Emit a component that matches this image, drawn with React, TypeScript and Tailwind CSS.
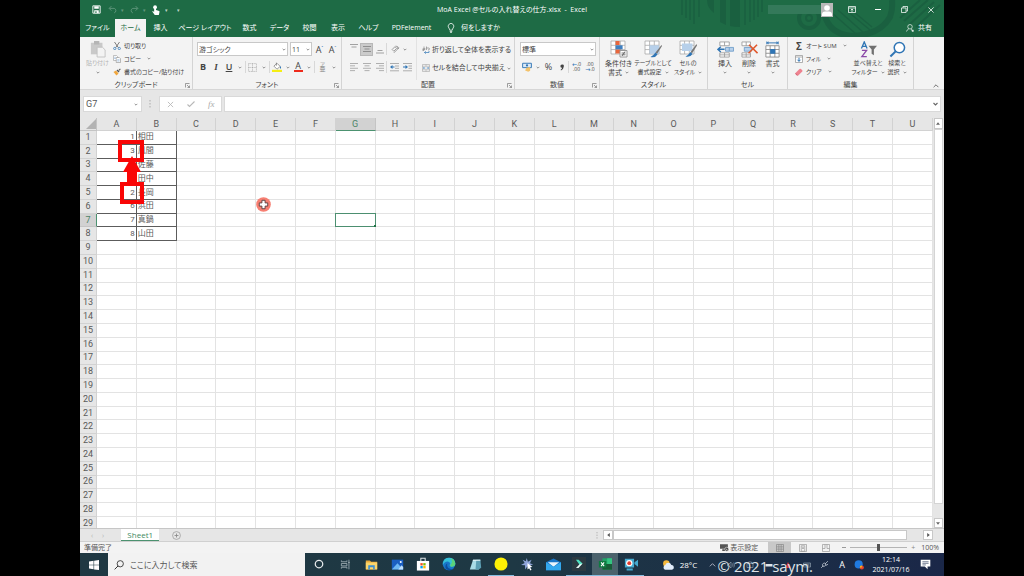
import React from "react";

type Kids = { children?: React.ReactNode };

const Caret = () => (
  <svg viewBox="0 0 6 4" className="h-[3px] w-[4px] shrink-0" aria-hidden="true">
    <path d="M1 1l2 2 2-2" fill="none" stroke="#777" strokeWidth="1.2" />
  </svg>
);

const Sep = () => <span className="h-3 w-px shrink-0 bg-[#d8d8d8]" />;

function Svg({ box = "0 0 16 16", cls, children }: Kids & { box?: string; cls: string }) {
  return (
    <svg viewBox={box} className={`shrink-0 ${cls}`} fill="none" aria-hidden="true">
      {children}
    </svg>
  );
}

function Tool({ label, cls, children }: Kids & { label: string; cls: string }) {
  return (
    <button type="button" aria-label={label} className={`flex h-[13px] shrink-0 items-center justify-center ${cls}`}>
      {children}
    </button>
  );
}

function Group({ name, cls, launcher = false, children }: Kids & { name: string; cls: string; launcher?: boolean }) {
  return (
    <section className={`relative flex shrink-0 flex-col border-r border-[#d4d4d4] ${cls}`}>
      <div className="flex h-[43px]">{children}</div>
      <h2 className="text-center leading-[9px]">{name}</h2>
      {launcher && (
        <button type="button" aria-label={`${name}の設定`} className="absolute right-[2px] bottom-[1px]">
          <Svg box="0 0 10 10" cls="size-[5px]">
            <path d="M1 9V1h8M4 4l5 5M9 5v4H5" stroke="#777" strokeWidth="1.4" />
          </Svg>
        </button>
      )}
    </section>
  );
}

function BigButton({ icon, lines, cls, caret = "row" }: { icon: React.ReactNode; lines: string[]; cls: string; caret?: "row" | "below" }) {
  return (
    <button type="button" className={`flex shrink-0 flex-col items-center pt-[3px] leading-[9px] ${cls}`}>
      <span className="mb-[1px] flex h-[18px] items-center">{icon}</span>
      <span>{lines[0]}</span>
      <span className="flex h-[9px] items-center gap-[3px]">
        {caret === "row" && lines[1]}
        <Caret />
      </span>
    </button>
  );
}

function LineButton({ icon, text, caret = false }: { icon: React.ReactNode; text: string; caret?: boolean }) {
  return (
    <button type="button" className="flex h-[13px] items-center gap-[3px] text-[6px]">
      <span className="flex w-[8px] justify-center">{icon}</span>
      <span>{text}</span>
      {caret && <span className="ml-[3px]"><Caret /></span>}
    </button>
  );
}

function Picker({ label, value, cls }: { label: string; value: string; cls: string }) {
  return (
    <span className={`relative flex h-[14px] shrink-0 ${cls}`}>
      <select aria-label={label} className="w-full appearance-none border border-[#c8c8c8] bg-white pl-px text-[7px] leading-none outline-none">
        <option>{value}</option>
      </select>
      <span className="pointer-events-none absolute inset-y-0 right-[2px] flex items-center">
        <Caret />
      </span>
    </span>
  );
}

function Lines({ widths, align }: { widths: number[]; align: "l" | "c" | "r" }) {
  return (
    <Svg box="0 0 8 10" cls="h-[10px] w-[8px]">
      {widths.map((w, i) => {
        const x = align === "l" ? 0 : align === "c" ? (8 - w) / 2 : 8 - w;
        return <rect key={i} x={x} y={1 + i * 2.4} width={w} height="0.9" fill="#a8a8a8" />;
      })}
    </Svg>
  );
}

const GridLines = () => <path d="M1 1h14v13H1zM1 5.3h14M1 9.6h14M5.6 1v13M10.3 1v13" stroke="#a8a8a8" fill="#fff" strokeWidth="0.8" />;

function TitleBar() {
  return (
    <div className="grid h-[19px] shrink-0 grid-cols-[1fr_auto_1fr] items-center text-white">
      <div className="flex items-center pl-[12px]">
        <button type="button" aria-label="上書き保存">
          <Svg cls="size-[9px]">
            <path d="M1.5 1.5h13v13h-13z" stroke="#fff" strokeWidth="1.6" />
            <path d="M4 2v4.500h8V2M4 9.500h8v5H4z" fill="#fff" />
            <path d="M6 11h2v3H6z" fill="#1e6b45" />
          </Svg>
        </button>
        <button type="button" aria-label="元に戻す" className="ml-[7px] flex items-center gap-[4px] opacity-30">
          <Svg cls="size-[9px]">
            <path d="M6 2L2 6l4 4M2.500 6H11q3 1 3 4t-3 4" stroke="#fff" strokeWidth="1.6" />
          </Svg>
          <span className="text-[5px]">▾</span>
        </button>
        <button type="button" aria-label="やり直し" className="ml-[6px] flex items-center gap-[4px] opacity-30">
          <Svg cls="size-[9px]">
            <path d="M10 2l4 4-4 4M13.500 6H5Q2 7 2 10t3 4" stroke="#fff" strokeWidth="1.6" />
          </Svg>
          <span className="text-[5px]">▾</span>
        </button>
        <button type="button" aria-label="タッチ/マウス モードの切り替え" className="ml-[5px]">
          <Svg cls="size-[10px]">
            <circle cx="6.500" cy="3.500" r="3" fill="#fff" />
            <path d="M5 4h3v4l5 1.500q1 .5 .5 2L12.500 16H6L2 10.500l1-1 2 1.500z" fill="#fff" />
          </Svg>
        </button>
        <span className="ml-[4px] text-[5px] opacity-70">▾</span>
        <span className="ml-[9px] text-[5px] opacity-70">▾</span>
      </div>
      <h1 className="whitespace-pre">MoA Excel @セルの入れ替えの仕方.xlsx  -  Excel</h1>
      <div className="flex items-center justify-end pr-[10px]">
        <span className="h-[9px] w-[53px] bg-[#34795a]" />
        <span className="mr-[15px] flex h-[14px] w-[12px] items-end justify-center bg-[#b9b9b9]">
          <Svg box="0 0 12 14" cls="h-[14px] w-[12px]">
            <circle cx="6" cy="5" r="2.800" fill="#fff" />
            <path d="M1 13V10.500Q1.500 8.500 4 8.500h4q2.500 0 3 2V13z" fill="#fff" />
          </Svg>
        </span>
        <button type="button" aria-label="リボンの表示オプション" className="mr-[19px]">
          <Svg box="0 0 16 14" cls="h-[7px] w-[8px]">
            <path d="M1 1h14v12H1zM1 4h14M8 12V6M5.500 8.500L8 6l2.500 2.500" stroke="#fff" strokeWidth="1.5" />
          </Svg>
        </button>
        <button type="button" aria-label="最小化" className="mr-[20px] h-px w-[6px] bg-white" />
        <button type="button" aria-label="元に戻す(縮小)" className="mr-[20px]">
          <Svg cls="size-[7px]">
            <path d="M1 4.500h10.500V15H1zM4.500 4V1H15v10.500h-3" stroke="#fff" strokeWidth="1.8" />
          </Svg>
        </button>
        <button type="button" aria-label="閉じる">
          <Svg cls="size-[6px]">
            <path d="M1 1l14 14M15 1L1 15" stroke="#fff" strokeWidth="2" />
          </Svg>
        </button>
      </div>
    </div>
  );
}

const tabs = [
  { name: "ファイル", cls: "w-[35px] text-white" },
  { name: "ホーム", cls: "w-[31px] bg-[#f3f3f3] text-[#1e6b45]" },
  { name: "挿入", cls: "w-[29px] text-white" },
  { name: "ページ レイアウト", cls: "w-[60px] text-white" },
  { name: "数式", cls: "w-[29px] text-white" },
  { name: "データ", cls: "w-[31px] text-white" },
  { name: "校閲", cls: "w-[29px] text-white" },
  { name: "表示", cls: "w-[28px] text-white" },
  { name: "ヘルプ", cls: "w-[33px] text-white" },
  { name: "PDFelement", cls: "w-[53px] text-white" },
];

function TabRow() {
  return (
    <nav className="flex h-[18px] shrink-0 items-stretch text-white">
      {tabs.map((t) => (
        <button key={t.name} type="button" className={`flex shrink-0 items-center justify-center ${t.cls}`}>
          {t.name}
        </button>
      ))}
      <button type="button" className="ml-[9px] flex items-center gap-[6px]">
        <Svg box="0 0 12 16" cls="h-[10px] w-[8px]">
          <path d="M4 11.500Q4 9.500 2.500 8A4.500 4.500 0 1 1 9.500 8Q8 9.500 8 11.500zM4 13.500h4M4.500 15.300h3" stroke="#fff" strokeWidth="1.200" />
        </Svg>
        何をしますか
      </button>
      <button type="button" className="mr-[12px] ml-auto flex items-center gap-[4px]">
        <Svg cls="size-[8px]">
          <circle cx="8" cy="5.500" r="4.500" stroke="#fff" strokeWidth="1.300" />
          <path d="M1 15q1-4 4.500-5M10 10l4 5M11 13.500h5M13.500 11v5" stroke="#fff" strokeWidth="1.300" />
        </Svg>
        共有
      </button>
    </nav>
  );
}

function Ribbon() {
  return (
    <div className="flex h-[53px] shrink-0 overflow-hidden border-b border-[#d6d6d6] bg-[#f3f3f3] text-[#444]">
      <Group name="クリップボード" cls="w-[113px]" launcher>
        <div className="w-[33px] pl-[2px] text-[#b3b3b3]">
          <BigButton
            cls="w-[31px] text-[6px]"
            caret="below"
            lines={["貼り付け"]}
            icon={
              <Svg box="0 0 18 20" cls="h-[18px] w-[16px]">
                <path d="M1 3h13v13H1z" fill="#c9c9c9" />
                <path d="M4.500 1h6v4h-6z" fill="#b5b5b5" />
                <path d="M8 8h6l3 3v8H8z" fill="#f3f3f3" stroke="#c0c0c0" />
              </Svg>
            }
          />
        </div>
        <div className="pt-[2px]">
          <LineButton
            text="切り取り"
            icon={
              <Svg cls="size-[8px]">
                <path d="M3 0l7.500 11M13 0L5.500 11" stroke="#555" strokeWidth="1.500" />
                <circle cx="3.500" cy="13" r="2.300" stroke="#2f75b5" strokeWidth="1.500" />
                <circle cx="12.500" cy="13" r="2.300" stroke="#2f75b5" strokeWidth="1.500" />
              </Svg>
            }
          />
          <LineButton
            text="コピー"
            caret
            icon={
              <Svg cls="size-[8px]">
                <path d="M1 1h6l2 2v8H1z" fill="#fff" stroke="#888" />
                <path d="M6.500 5h6l2.500 2.500V15H6.500z" fill="#fff" stroke="#777" />
                <path d="M8.500 9.500h4.500M8.500 12h4.500M2.500 4.500h3M2.500 7h3" stroke="#5b8cc0" />
              </Svg>
            }
          />
          <LineButton
            text="書式のコピー/貼り付け"
            icon={
              <Svg cls="size-[8px]">
                <path d="M1 8l5-3 5 6-4 4z" fill="#f0a63c" />
                <path d="M7 5l4 4 2-2-4-4zM11 4l3-3 1.500 1.500-3 3z" fill="#555" />
              </Svg>
            }
          />
        </div>
      </Group>

      <Group name="フォント" cls="w-[149px]" launcher>
        <div className="pl-[4px]">
          <div className="flex h-[20px] items-end">
            <Picker label="フォント" value="游ゴシック" cls="mb-[1px] w-[91px]" />
            <Picker label="フォント サイズ" value="11" cls="mb-[1px] ml-[2px] w-[22px]" />
            <Tool label="フォント サイズの拡大" cls="mb-[1px] ml-[1px] w-[13px] text-[9px]">A<span className="mb-[4px] text-[5px] text-[#2f75b5]">ˆ</span></Tool>
            <Tool label="フォント サイズの縮小" cls="mb-[1px] w-[13px] text-[9px]">A<span className="mb-[4px] text-[5px] text-[#2f75b5]">ˇ</span></Tool>
          </div>
          <div className="flex h-[20px] items-center">
            <Tool label="太字" cls="w-[12px] text-[9px] font-bold">B</Tool>
            <Tool label="斜体" cls="w-[14px] font-['Liberation_Serif',serif] text-[9px] font-bold italic">I</Tool>
            <Tool label="下線" cls="w-[12px] text-[9px] font-semibold underline">U</Tool>
            <Tool label="下線の種類" cls="w-[10px]"><Caret /></Tool>
            <Sep />
            <Tool label="罫線" cls="w-[13px]">
              <Svg cls="size-[9px]"><path d="M1 1h14v14H1zM8 1v14M1 8h14" stroke="#999" strokeDasharray="2 1" /></Svg>
            </Tool>
            <Tool label="罫線の種類" cls="w-[10px]"><Caret /></Tool>
            <Sep />
            <Tool label="塗りつぶしの色" cls="w-[13px]">
              <Svg cls="size-[10px]">
                <path d="M3 6.500L8 2l5 5-5 4.500z" fill="#fff" stroke="#666" />
                <path d="M7 1v5" stroke="#666" />
                <path d="M13 6q2.500 3 1 5-2-1-1-5z" fill="#2f75b5" />
                <path d="M0 12.500h16v3.500H0z" fill="#f5ee14" />
              </Svg>
            </Tool>
            <Tool label="塗りつぶしの種類" cls="w-[9px]"><Caret /></Tool>
            <Tool label="フォントの色" cls="w-[12px] flex-col text-[9px]">
              <span className="h-[8px] leading-[8px]">A</span>
              <span className="h-[2px] w-[9px] bg-[#ee2a1b]" />
            </Tool>
            <Tool label="フォントの色の種類" cls="w-[10px]"><Caret /></Tool>
            <Sep />
            <Tool label="ふりがな" cls="w-[15px] flex-col text-[#888]">
              <span className="text-[5px] leading-[4px]">ア</span>
              <span className="text-[6px] leading-[6px]">亜</span>
            </Tool>
            <Tool label="ふりがなの設定" cls="w-[8px]"><Caret /></Tool>
          </div>
        </div>
      </Group>

      <Group name="配置" cls="w-[173px]" launcher>
        <div className="w-[74px] pl-[5px]">
          <div className="flex h-[20px] items-center pt-[4px]">
            <Tool label="上揃え" cls="w-[13px] pb-[6px]"><Svg box="0 0 8 4" cls="h-[4px] w-[8px]"><path d="M0 .5h8M1.500 3h5" stroke="#999" strokeWidth=".9" /></Svg></Tool>
            <Tool label="上下中央揃え" cls="w-[13px] border border-[#b8b8b8] bg-[#cbcbcb]"><Svg box="0 0 8 6" cls="h-[6px] w-[8px]"><path d="M0 .5h8M1.500 3h5M0 5.500h8" stroke="#888" strokeWidth=".9" /></Svg></Tool>
            <Tool label="下揃え" cls="w-[13px] pt-[5px]"><Svg box="0 0 8 4" cls="h-[4px] w-[8px]"><path d="M1.500 .5h5M0 3h8" stroke="#999" strokeWidth=".9" /></Svg></Tool>
            <Sep />
            <Tool label="方向" cls="w-[16px]">
              <Svg cls="size-[9px]"><path d="M2 8l5-5 3 3-5 5zM5 14L14 5M14 5l-3 .5M8 2q5-1 5 5" stroke="#888" strokeWidth="1.400" /></Svg>
            </Tool>
            <Caret />
          </div>
          <div className="flex h-[20px] items-center">
            <Tool label="左揃え" cls="w-[13px]"><Lines align="l" widths={[8, 5, 8, 5]} /></Tool>
            <Tool label="中央揃え" cls="w-[13px]"><Lines align="c" widths={[8, 5, 8, 5]} /></Tool>
            <Tool label="右揃え" cls="w-[13px]"><Lines align="r" widths={[8, 5, 8, 5]} /></Tool>
            <Sep />
            <Tool label="インデントを減らす" cls="w-[14px]">
              <Svg box="0 0 9 10" cls="h-[10px] w-[9px]"><path d="M0 1.500h9M5 4h4M5 6.300h4M0 8.800h9" stroke="#a5a5a5" strokeWidth=".9" /><path d="M0 5l2.500-2v4zM2 4.500h2.500v1H2z" fill="#2f75b5" /></Svg>
            </Tool>
            <Tool label="インデントを増やす" cls="w-[12px]">
              <Svg box="0 0 9 10" cls="h-[10px] w-[9px]"><path d="M0 1.500h9M5.500 4H9M5.500 6.300H9M0 8.800h9" stroke="#a5a5a5" strokeWidth=".9" /><path d="M5 5L2.500 3v4zM0 4.500h2.500v1H0z" fill="#2f75b5" /></Svg>
            </Tool>
          </div>
        </div>
        <div className="flex grow flex-col border-l border-[#e2e2e2] pt-[3px] pl-[5px]">
          <button type="button" className="flex h-[19px] items-center gap-[2px]">
            <Svg cls="size-[8px]">
              <path d="M1 6h6M4 1v8q-3 1-3-1t5-2M9 1v7M9 4h4q2 0 2 2t-3 2" stroke="#777" strokeWidth="1.200" />
              <path d="M14 10v3H5M7.500 10.500L5 13l2.500 2.500" stroke="#2f75b5" strokeWidth="1.400" />
            </Svg>
            折り返して全体を表示する
          </button>
          <button type="button" className="flex h-[18px] items-center gap-[2px]">
            <Svg cls="size-[8px]">
              <path d="M1 1h14v14H1zM1 4.500h14M1 11.500h14M8 1v3.500M8 11.500V15" stroke="#999" />
              <path d="M2.500 8h4M9.500 8h4M4 6.500L2.500 8 4 9.500M12 6.500L13.500 8 12 9.500" stroke="#2f75b5" strokeWidth="1.200" />
            </Svg>
            セルを結合して中央揃え
            <Caret />
          </button>
        </div>
      </Group>

      <Group name="数値" cls="w-[85px]" launcher>
        <div className="pl-[5px]">
          <div className="flex h-[20px] items-end">
            <Picker label="表示形式" value="標準" cls="mb-[1px] w-[76px]" />
          </div>
          <div className="flex h-[20px] items-center">
            <Tool label="通貨表示形式" cls="w-[13px]">
              <Svg cls="size-[10px]">
                <path d="M1 2h14v7H1z" fill="#dce9f6" stroke="#2f75b5" strokeWidth="1.500" />
                <circle cx="8" cy="5.500" r="1.800" fill="#2f75b5" />
                <path d="M7 9l6-1v6l-3 1.500-5-2z" fill="#f3c26b" />
              </Svg>
            </Tool>
            <Tool label="通貨の種類" cls="w-[9px]"><Caret /></Tool>
            <Tool label="パーセント スタイル" cls="w-[13px] text-[9px]">%</Tool>
            <Tool label="桁区切りスタイル" cls="w-[13px]">
              <Svg box="0 0 6 10" cls="h-[7px] w-[4px]"><path d="M3 .5a2.500 2.500 0 0 1 2.700 3Q5.500 7.500 1.500 9.500L1 8.500Q3 7 3.200 5.500A2.500 2.500 0 0 1 3 .5z" fill="#444" /></Svg>
            </Tool>
            <Sep />
            <Tool label="小数点以下の表示桁数を増やす" cls="w-[15px] flex-col text-[5px] leading-[5px]"><span><b className="text-[#2f75b5]">←</b>.0</span><span>.00</span></Tool>
            <Tool label="小数点以下の表示桁数を減らす" cls="w-[12px] flex-col text-[5px] leading-[5px]"><span>.00</span><span><b className="text-[#2f75b5]">→</b>.0</span></Tool>
          </div>
        </div>
      </Group>

      <Group name="スタイル" cls="w-[108px]">
        <BigButton
          cls="ml-[2px] w-[33px]"
          lines={["条件付き", "書式"]}
          icon={
            <Svg box="0 0 18 18" cls="size-[18px]">
              <GridLines />
              <path d="M5.600 1h4v4h-4zM5.600 9.500h5v4h-5z" fill="#e8663c" />
              <path d="M5.600 5.300h7v4h-7z" fill="#3f7fc0" />
              <path d="M10 10.500h7v6.500h-7z" fill="#fff" stroke="#999" />
              <path d="M11.500 13h4M11.500 14.800h4M15 11.500l-3 4.500" stroke="#555" strokeWidth=".8" />
            </Svg>
          }
        />
        <BigButton
          cls="w-[36px] text-[6px]"
          lines={["テーブルとして", "書式設定"]}
          icon={
            <Svg box="0 0 18 18" cls="size-[18px]">
              <GridLines />
              <path d="M5.600 5.300H15v8.500H5.600z" fill="#b7d0ea" />
              <path d="M17.500 5l-6 7.500 1.500 1.500 5-8z" fill="#777" />
              <path d="M11.500 12.500l2 2q-2 3.500-7 2.500 2.500-1 5-4.500z" fill="#2f75b5" />
            </Svg>
          }
        />
        <BigButton
          cls="w-[34px] text-[6px]"
          lines={["セルの", "スタイル"]}
          icon={
            <Svg box="0 0 18 18" cls="size-[18px]">
              <GridLines />
              <path d="M3 3.500h10.500v7.500H3z" fill="#b7d0ea" />
              <path d="M17.500 4l-6 8 1.500 1.500 5-8z" fill="#777" />
              <path d="M11.500 12l2 2q-2 3.500-7 2.500 2.500-1 5-4.500z" fill="#2f75b5" />
            </Svg>
          }
        />
      </Group>

      <Group name="セル" cls="w-[80px]">
        <BigButton
          cls="ml-[5px] w-[24px]"
          caret="below"
          lines={["挿入"]}
          icon={
            <Svg box="0 0 18 18" cls="size-[17px]">
              <path d="M3 1h10v4H3zM8 1v4M3 12.500h10v4.500H3zM8 12.500V17M3 14.700h10" fill="#fff" stroke="#999" strokeWidth=".9" />
              <path d="M9 6.800h8.500v4H9zM13 6.800v4" fill="#b7d0ea" stroke="#6d9cc9" strokeWidth=".9" />
              <path d="M1 8.800h7M4 6L1 8.800l3 2.800" stroke="#2f75b5" strokeWidth="1.500" />
            </Svg>
          }
        />
        <BigButton
          cls="w-[24px]"
          caret="below"
          lines={["削除"]}
          icon={
            <Svg box="0 0 18 18" cls="size-[17px]">
              <path d="M1 1h9v4H1zM5.500 1v4M1 12.500h9v4.500H1zM5.500 12.500V17M1 14.700h9" fill="#fff" stroke="#999" strokeWidth=".9" />
              <path d="M3.500 6.800H11v4H3.500z" fill="#b7d0ea" stroke="#6d9cc9" strokeWidth=".9" />
              <path d="M8.500 4l9 9M17 4l-9 9" stroke="#e0582c" strokeWidth="1.700" />
            </Svg>
          }
        />
        <BigButton
          cls="w-[23px]"
          caret="below"
          lines={["書式"]}
          icon={
            <Svg box="0 0 18 18" cls="size-[17px]">
              <path d="M2 5h14v12H2zM6.500 5v12M11.500 5v12M2 9h14M2 13h14" fill="#fff" stroke="#888" strokeWidth=".9" />
              <path d="M6.500 8.500h5.500v5H6.500z" fill="#2f75b5" />
              <path d="M3 2h12M3 .5v3M15 .5v3M5 1L3.500 2 5 3M13 1l1.500 1L13 3" stroke="#2f75b5" />
            </Svg>
          }
        />
      </Group>

      <Group name="編集" cls="w-[126px]">
        <div className="w-[60px] pt-[2px] pl-[7px]">
          <LineButton text="オート SUM" caret icon={<span className="text-[10px] font-bold">Σ</span>} />
          <LineButton
            text="フィル"
            caret
            icon={
              <Svg cls="size-[8px]">
                <path d="M1 1h14v14H1zM1 4h14" fill="#fff" stroke="#888" strokeWidth="1.300" />
                <path d="M8 5.500v7M5 9.500l3 3.200 3-3.200" stroke="#2f75b5" strokeWidth="2" />
              </Svg>
            }
          />
          <LineButton
            text="クリア"
            caret
            icon={
              <Svg cls="size-[8px]">
                <path d="M1 10l8-8q1.500-1 3 0l2.500 2.500q1 1.200 0 2.500l-8 8H4l-3-3q-.8-1 0-2z" fill="#ee8390" />
                <path d="M1 10l5 5H4l-3-3q-.8-1 0-2z" fill="#d05a6c" />
              </Svg>
            }
          />
        </div>
        <BigButton
          cls="ml-[3px] w-[34px] text-[6px]"
          lines={["並べ替えと", "フィルター"]}
          icon={
            <Svg box="0 0 18 18" cls="size-[17px]">
              <path d="M1.500 8L4.500 1l3 7M2.600 5.700h3.800" stroke="#2f75b5" strokeWidth="1.400" />
              <path d="M2 10h5l-5 6.500h5.200" stroke="#8b4aa8" strokeWidth="1.400" />
              <path d="M9 5h9l-3.300 4v6l-2.400-1.500V9z" fill="#707070" />
            </Svg>
          }
        />
        <BigButton
          cls="w-[24px] text-[6px]"
          lines={["検索と", "選択"]}
          icon={
            <Svg box="0 0 18 18" cls="size-[17px]">
              <circle cx="11" cy="7" r="5.500" fill="#fff" stroke="#2f75b5" strokeWidth="1.600" />
              <path d="M7 11l-5.500 5.500" stroke="#2f75b5" strokeWidth="2.200" />
            </Svg>
          }
        />
      </Group>
      <button type="button" aria-label="リボンを折りたたむ" className="mr-[5px] mb-[1px] ml-auto self-end">
        <Svg box="0 0 10 6" cls="h-[4px] w-[6px]"><path d="M1 5l4-4 4 4" stroke="#666" strokeWidth="1.500" /></Svg>
      </button>
    </div>
  );
}

function FormulaBar() {
  return (
    <div className="flex shrink-0 items-center bg-[#e6e6e6] px-[3px] py-[6px] text-[#555]">
      <span className="relative flex h-[16px] w-[59px] shrink-0 border border-[#d9d9d9] bg-white">
        <input aria-label="名前ボックス" defaultValue="G7" className="w-full bg-transparent pl-[2px] font-[Roboto,sans-serif] text-[9px] outline-none" />
        <span className="absolute inset-y-0 right-[3px] flex items-center"><Caret /></span>
      </span>
      <Svg box="0 0 2 8" cls="mx-[7px] h-[8px] w-[2px]"><path d="M1 0v1.500M1 3v1.500M1 6v1.500" stroke="#aaa" /></Svg>
      <div className="ml-[1px] flex h-[16px] w-[63px] shrink-0 items-center justify-around border border-[#d9d9d9] bg-white">
        <button type="button" aria-label="キャンセル"><Svg cls="size-[7px]"><path d="M2 2l12 12M14 2L2 14" stroke="#b8b8b8" strokeWidth="2" /></Svg></button>
        <button type="button" aria-label="入力"><Svg cls="size-[8px]"><path d="M1 9l4 4L15 3" stroke="#b8b8b8" strokeWidth="2.200" /></Svg></button>
        <button type="button" aria-label="関数の挿入" className="font-['Liberation_Serif',serif] text-[9px] text-[#aaa] italic">fx</button>
      </div>
      <span className="ml-[2px] flex h-[16px] grow items-center border border-[#d9d9d9] bg-white pr-[2px]">
        <input aria-label="数式バー" className="min-w-0 grow bg-transparent outline-none" />
        <Svg box="0 0 10 8" cls="h-[4px] w-[5px]"><path d="M1 2l4 4 4-4" stroke="#666" strokeWidth="2.200" /></Svg>
      </span>
    </div>
  );
}

const columns = "ABCDEFGHIJKLMNOPQRSTU".split("");
const rowCount = 29;
const entries: [string, string][] = [
  ["1", "相田"],
  ["3", "風間"],
  ["", "佐藤"],
  ["", "田中"],
  ["2", "長岡"],
  ["6", "浜田"],
  ["7", "真鍋"],
  ["8", "山田"],
];

function cellClass(row: number, col: number) {
  if (row === 7 && col === 6) return "relative border-[#5b9a7c] p-0";
  if (row <= 8 && col < 2) return `border-[#5c5c5c] p-0 ${col === 0 ? "pr-px text-right" : "pl-px text-left"}`;
  return "border-[#e3e3e3] p-0";
}

function Sheet() {
  return (
    <div className="flex min-h-0 flex-1 bg-[#e6e6e6]">
      <div className="relative min-w-0 flex-1 overflow-hidden">
        <table className="h-[calc(100%+3px)] w-full table-fixed border-separate border-spacing-0 bg-white font-[Roboto,'Noto_Sans_CJK_JP',sans-serif] text-[8px] leading-none text-[#5a5a5a]">
          <thead>
            <tr className="h-[13px] bg-[#e6e6e6] text-[9px]">
              <th aria-label="すべて選択" className="h-[13px] w-[17px] border-r border-b border-[#c4c4c4] p-0">
                <Svg box="0 0 10 10" cls="ml-auto size-[10px]"><path d="M10 0v10H0z" fill="#b3b3b3" /></Svg>
              </th>
              {columns.map((c) => (
                <th key={c} scope="col" className={c === "G" ? "border-r border-b border-r-[#c4c4c4] border-b-[#4c9270] bg-[#d2d2d2] p-0 font-normal text-[#4c8468]" : "border-r border-b border-[#d2d2d2] p-0 font-normal"}>
                  {c}
                </th>
              ))}
            </tr>
          </thead>
          <tbody>
            {Array.from({ length: rowCount }, (_, i) => i + 1).map((r) => (
              <tr key={r}>
                <th scope="row" className={r === 7 ? "border-r border-b border-r-[#4c9270] border-b-[#c4c4c4] bg-[#d2d2d2] p-0 text-[9px] font-normal text-[#4c8468]" : "border-r border-b border-[#d2d2d2] bg-[#e6e6e6] p-0 text-[9px] font-normal"}>
                  {r}
                </th>
                {columns.map((c, ci) => (
                  <td key={c} className={`border-r border-b ${cellClass(r, ci)}`}>
                    {r <= 8 && ci < 2 ? entries[r - 1][ci] : null}
                    {r === 7 && ci === 6 && (
                      <span className="absolute -inset-px border border-[#4c8f70]">
                        <span className="absolute -right-px -bottom-px size-[2px] bg-[#217346]" />
                      </span>
                    )}
                  </td>
                ))}
              </tr>
            ))}
          </tbody>
        </table>
        <svg viewBox="0 0 70 90" className="pointer-events-none absolute top-0 left-0 h-[90px] w-[70px]" aria-hidden="true">
          <path d="M40 24h22v18H40zM42 66h20v18H42z" fill="none" stroke="#f90606" strokeWidth="4" />
          <path d="M52 38l9 16h-4v13H47V54h-4z" fill="#f90606" />
        </svg>
        <svg viewBox="0 0 16 16" className="pointer-events-none absolute top-[79px] left-[176px] size-[15px]" aria-hidden="true">
          <circle cx="8" cy="8" r="7.800" fill="#f77f72" />
          <path d="M6.300 3.500h3.400v2.800h2.800v3.400H9.700v2.800H6.300V9.700H3.500V6.300h2.800z" fill="#fff" stroke="#5c4040" strokeWidth="1" />
        </svg>
      </div>
      <div className="flex w-[11px] shrink-0 flex-col items-center pr-[1px]">
        <button type="button" aria-label="上へスクロール" className="flex h-[11px] w-[9px] items-center justify-center border border-[#c8c8c8] bg-white">
          <Svg box="0 0 6 4" cls="h-[3px] w-[4px]"><path d="M0 4l3-4 3 4z" fill="#666" /></Svg>
        </button>
        <span className="w-[9px] grow border border-[#d4d4d4] bg-white" />
        <span className="h-[14px]" />
        <button type="button" aria-label="下へスクロール" className="flex h-[10px] w-[9px] items-center justify-center border border-[#c8c8c8] bg-white">
          <Svg box="0 0 6 4" cls="h-[3px] w-[4px]"><path d="M0 0l3 4 3-4z" fill="#666" /></Svg>
        </button>
      </div>
    </div>
  );
}

function SheetTabs() {
  return (
    <div className="flex h-[13px] shrink-0 items-center border-t border-[#c6c6c6] bg-[#e6e6e6]">
      <button type="button" aria-label="前のシート" className="ml-[11px] text-[7px] leading-none text-[#b5b5b5]">‹</button>
      <button type="button" aria-label="次のシート" className="ml-[9px] text-[7px] leading-none text-[#b5b5b5]">›</button>
      <button type="button" className="ml-[17px] flex h-[12px] w-[38px] items-center justify-center border-b border-[#4c9270] bg-white text-[8px] leading-none text-[#3f8a64]">Sheet1</button>
      <button type="button" aria-label="新しいシート" className="ml-[13px]">
        <Svg cls="size-[9px]"><circle cx="8" cy="8" r="7" stroke="#999" strokeWidth="1.300" /><path d="M8 4.500v7M4.500 8h7" stroke="#888" strokeWidth="1.500" /></Svg>
      </button>
      <Svg box="0 0 2 8" cls="mr-[5px] ml-auto h-[7px] w-[2px]"><path d="M1 0v1.500M1 3v1.500M1 6v1.500" stroke="#aaa" /></Svg>
      <button type="button" aria-label="左へスクロール" className="flex h-[10px] w-[10px] items-center justify-center border border-[#c8c8c8] bg-white">
        <Svg box="0 0 4 6" cls="h-[4px] w-[3px]"><path d="M4 0L0 3l4 3z" fill="#555" /></Svg>
      </button>
      <span className="h-[10px] w-[34%] border border-[#c8c8c8] bg-white" />
      <button type="button" aria-label="右へスクロール" className="mr-[11px] ml-[16px] flex h-[10px] w-[10px] items-center justify-center border border-[#c8c8c8] bg-white">
        <Svg box="0 0 4 6" cls="h-[4px] w-[3px]"><path d="M0 0l4 3-4 3z" fill="#555" /></Svg>
      </button>
    </div>
  );
}

function StatusBar() {
  return (
    <div className="flex h-[12px] shrink-0 items-center border-t border-[#d0d0d0] bg-[#f3f3f3] pr-[5px] pl-[4px] text-[#555]">
      <span>準備完了</span>
      <button type="button" className="ml-auto flex items-center gap-[1px]">
        <Svg cls="size-[9px]">
          <path d="M0 2h14v8H0zM4 11h5v3H4z" fill="#555" />
          <circle cx="12" cy="11" r="3.500" fill="#444" stroke="#f3f3f3" />
          <circle cx="12" cy="11" r="1" fill="#fff" />
        </Svg>
        表示設定
      </button>
      <button type="button" aria-label="標準" className="ml-[10px] flex h-[11px] w-[23px] items-center justify-center bg-[#c8c8c8]">
        <Svg cls="size-[8px]"><path d="M1 1h14v14H1zM1 5.700h14M1 10.300h14M5.700 1v14M10.300 1v14" stroke="#888" strokeWidth="1.400" /></Svg>
      </button>
      <button type="button" aria-label="ページ レイアウト表示" className="flex w-[23px] justify-center">
        <Svg cls="size-[8px]"><path d="M1 1h14v14H1zM4.500 3.500h7v11h-7zM6 6.500h4M6 9h4" stroke="#999" strokeWidth="1.400" /></Svg>
      </button>
      <button type="button" aria-label="改ページ プレビュー" className="flex w-[23px] justify-center">
        <Svg cls="size-[8px]"><path d="M1 1h14v14H1zM1 9h5V1M10 1v8h5" stroke="#999" strokeWidth="1.400" /></Svg>
      </button>
      <button type="button" aria-label="縮小" className="ml-[5px] h-px w-[4px] bg-[#999]" />
      <input
        type="range"
        aria-label="ズーム"
        min="0"
        max="200"
        defaultValue="100"
        className="mx-[4px] h-[8px] w-[57px] appearance-none bg-transparent [&::-webkit-slider-runnable-track]:h-px [&::-webkit-slider-runnable-track]:bg-[#b5b5b5] [&::-webkit-slider-thumb]:-mt-[3px] [&::-webkit-slider-thumb]:h-[7px] [&::-webkit-slider-thumb]:w-[3px] [&::-webkit-slider-thumb]:appearance-none [&::-webkit-slider-thumb]:bg-[#555]"
      />
      <button type="button" aria-label="拡大" className="text-[7px] leading-none text-[#888]">+</button>
      <span className="ml-[6px]">100%</span>
    </div>
  );
}

const apps: { name: string; state: string; icon: React.ReactNode }[] = [
  { name: "Cortana", state: "border-transparent", icon: <Svg cls="size-[10px]"><circle cx="8" cy="8" r="6" stroke="#e6eaec" strokeWidth="2" /></Svg> },
  { name: "タスク ビュー", state: "border-transparent", icon: <Svg cls="size-[11px]"><path d="M2 2v2h8V2M2 14v-2h8v2M2 6.500h8v3.500H2zM13 1v14M11.800 5h2.500" stroke="#a4b2b9" strokeWidth="1.200" /></Svg> },
  { name: "エクスプローラー", state: "border-transparent", icon: <Svg cls="size-[13px]"><path d="M1 3h5l1.500 1.500H15V14H1z" fill="#e9a93a" /><path d="M1 5.500h14V14H1z" fill="#fbd56b" /><path d="M4 9h8v5h-2v-2.500H6V14H4z" fill="#3c8fd4" /></Svg> },
  { name: "フォト", state: "border-transparent", icon: <Svg cls="size-[13px]"><path d="M1 2h14v12H1z" fill="#1a5fc2" /><path d="M1 14L8 6.500 15 14z" fill="#6db7f5" /><path d="M9 14l4-5 2 2v3z" fill="#bfe0fb" /><circle cx="12" cy="5" r="1.200" fill="#fff" /></Svg> },
  { name: "Microsoft Store", state: "border-transparent", icon: <Svg cls="size-[14px]"><path d="M5.500 5V1.500h5V5" stroke="#dfe5e8" strokeWidth="1.200" /><path d="M1 4.500h14v11H1z" fill="#fff" /><path d="M5 7h2.700v2.700H5z" fill="#f05023" /><path d="M8.300 7H11v2.700H8.300z" fill="#7fba00" /><path d="M5 10.300h2.700V13H5z" fill="#00a4ef" /><path d="M8.300 10.300H11V13H8.300z" fill="#ffb900" /></Svg> },
  { name: "Edge", state: "border-transparent", icon: <Svg cls="size-[14px]"><circle cx="8" cy="8" r="7.200" fill="#1976c9" /><path d="M1 7a7.200 7.200 0 0 1 14.200 0q.3 4-4.700 4-3-.5-1-3.500Q8 4 4.500 5.500 2 6.500 1 9z" fill="#35c1d8" /><path d="M10 1.500A7.200 7.200 0 0 1 15.200 8q-.5 3-4.200 3-2-.3-1.500-2Q13 6 10 1.500z" fill="#5bd27a" /><path d="M6 7.500Q5 12 9 13.500q2 .5 4-.5-2 2.500-5.500 2.200Q3 14 4 10 4.500 8 6 7.500z" fill="#0c4fa0" /></Svg> },
  { name: "メモ帳", state: "border-transparent", icon: <Svg cls="size-[13px]"><path d="M5 2h9l-2 12H1z" fill="#a9dbe6" /><path d="M9 2h5l1 10-3 2H8z" fill="#5d9fb4" /><path d="M5 2h9l-.3 1.500H4.500z" fill="#eaf6f8" /></Svg> },
  { name: "マーカー", state: "border-[#86bde0]", icon: <Svg cls="size-[14px]"><circle cx="8" cy="8" r="7.500" fill="#fdf005" /></Svg> },
  { name: "ポインター", state: "border-transparent", icon: <Svg cls="size-[13px]"><path d="M7 0l1.500 4.500L13 2l-2 4.500 4 1.500-4 1 1 4-4-3-3 4V9L0 8.500 4.500 6 2 2l4 2z" fill="#8fa4d8" /><path d="M8 6l6 5-3 .5 2 3-1.500 1-1.500-3-2 1.500z" fill="#fff" /></Svg> },
  { name: "メール", state: "border-transparent", icon: <Svg cls="size-[15px]"><path d="M0 5.500l8-4 8 4V14H0z" fill="#1a76c7" /><path d="M2 5.500h12L8 10.500z" fill="#e9f5fd" /><path d="M0 5.500l8 5 8-5V14H0z" fill="#33a8ee" /></Svg> },
  { name: "Filmora", state: "border-[#86bde0]", icon: <Svg cls="size-[14px]"><path d="M0 0h16v16H0z" fill="#2c3a42" /><path d="M4.500 3h3L12 7.500 9.500 10z" fill="#4fe0c0" /><path d="M12 7.500L7.500 12.500h-3L9 8z" fill="#e9fbf7" /></Svg> },
  { name: "Excel", state: "border-[#86bde0] bg-[#4b626c]", icon: <Svg cls="size-[14px]"><path d="M5 1.500h11v13H5z" fill="#21a366" /><path d="M5 8h11v6.500H5z" fill="#185c37" /><path d="M10.500 1.500H16V8h-5.500z" fill="#33c481" /><path d="M1 4.500h8.500v7.500H1z" fill="#0f7a41" /><path d="M3.500 6.200l3.500 4.200M7 6.200l-3.500 4.200" stroke="#fff" strokeWidth="1.200" /></Svg> },
  { name: "レコーダー", state: "border-[#86bde0]", icon: <Svg cls="size-[14px]"><path d="M1 2h10.500v10H1zM12 6l4-3v8l-4-3zM3 13h7v2.500H3z" fill="#45a9cf" /><circle cx="6" cy="7" r="3.600" fill="#fff" /><circle cx="6" cy="7" r="2.200" fill="#e23b2e" /></Svg> },
];

function Taskbar() {
  return (
    <div className="relative flex h-[23px] shrink-0 items-stretch bg-linear-to-r from-[#1f3842] via-[#1e3844] to-[#1a2748] text-white">
      <button type="button" aria-label="スタート" className="flex w-[28px] shrink-0 items-center justify-center">
        <Svg cls="size-[10px]"><path d="M0 2.300L7.300 1.200v6.300H0zM8.200 1L16 0v7.500H8.200zM0 8.500h7.300v6.300L0 13.700zM8.200 8.500H16V16l-7.800-1z" fill="#fff" /></Svg>
      </button>
      <label className="flex w-[197px] shrink-0 items-center gap-[6px] bg-[#f2f2f2] pl-[6px]">
        <Svg cls="size-[10px]"><circle cx="10" cy="6" r="5" stroke="#333" strokeWidth="1.400" /><path d="M6.500 9.500L1 15" stroke="#333" strokeWidth="1.600" /></Svg>
        <input type="search" aria-label="検索" placeholder="ここに入力して検索" className="min-w-0 grow bg-transparent text-[8px] text-[#444] outline-none placeholder:text-[#555]" />
      </label>
      <div className="flex pl-px">
        {apps.map((a) => (
          <button key={a.name} type="button" aria-label={a.name} className={`flex w-[26px] shrink-0 items-center justify-center border-b ${a.state}`}>
            {a.icon}
          </button>
        ))}
      </div>
      <div className="ml-auto flex items-center pr-[13px]">
        <button type="button" className="flex items-center gap-[5px] text-[8px]">
          <Svg box="0 0 18 14" cls="h-[10px] w-[13px]">
            <circle cx="6" cy="5" r="4.500" fill="#f6b93b" />
            <path d="M4 13.500a3.500 3.500 0 0 1 .5-6.500A4.500 4.500 0 0 1 13 7a3.300 3.300 0 0 1 1 6.500z" fill="#e3eefa" />
          </Svg>
          28°C
        </button>
        <div className="ml-[12px] flex items-center gap-[11px]">
          <Svg box="0 0 10 6" cls="h-[4px] w-[7px]"><path d="M1 5l4-4 4 4" stroke="#ccd" strokeWidth="1.200" /></Svg>
          <Svg cls="size-[8px]"><path d="M1 6h3l4-4v12l-4-4H1zM11 5q2 3 0 6M13.500 3q3 5 0 10" stroke="#9fb0bd" strokeWidth="1.200" /></Svg>
          <Svg cls="size-[8px]"><path d="M2 5h12v8H2zM5 5V2h6v3" stroke="#9fb0bd" strokeWidth="1.200" /></Svg>
          <Svg cls="size-[8px]"><path d="M1 6h14v5H1z" fill="#dfe5ea" /></Svg>
          <Svg cls="size-[8px]"><path d="M8 2l6 12H2z" fill="#c9353b" /></Svg>
          <Svg cls="size-[8px]"><path d="M1 4h14v8H1zM3 6.500h10M3 9.500h10" stroke="#9fb0bd" strokeWidth="1.200" /></Svg>
        </div>
        <Svg cls="ml-[9px] size-[9px]"><path d="M2 14l4-4M5 11q-2-3 1-5t4 1-2 4-3 0M9 7l5-5M10 9q3 1 4-2" stroke="#c9d2dc" strokeWidth="1.300" /></Svg>
        <span className="ml-[10px] text-[9px]">A</span>
        <Svg cls="ml-[9px] size-[10px]"><circle cx="7.500" cy="7" r="6.500" fill="#1f7ae0" /><circle cx="12.500" cy="12" r="3.300" fill="#e8452c" /><path d="M12.500 12V8.700A3.300 3.300 0 0 0 9.200 12z" fill="#f5c518" /></Svg>
        <time className="ml-[8px] w-[38px] text-center text-[7px] leading-[10px]">12:14<br />2021/07/16</time>
        <button type="button" aria-label="通知" className="ml-[10px]">
          <Svg cls="size-[11px]"><path d="M1 1h14v10h-4v4l-4-4H1z" fill="#fff" /><path d="M3.500 4h9M3.500 6.300h9M3.500 8.600h5" stroke="#3b4a68" /></Svg>
        </button>
      </div>
      <p className="pointer-events-none absolute right-[131px] bottom-0 font-['Open_Sans','Noto_Sans',sans-serif] text-[15px] leading-[20px] text-[#dfe3e8]">© 2021 saym.</p>
    </div>
  );
}

const HeaderArt = () => (
  <svg viewBox="0 0 284 37" className="pointer-events-none absolute top-0 right-0 h-[37px] w-[284px]" fill="none" aria-hidden="true">
    <g stroke="#1a6040">
      <path d="M22 0v15M26 0v18M30 0v20M34 0v24M39 0v17" strokeWidth="1.500" />
      <path d="M47 0q0 8 7 13V0z" fill="#1a6040" stroke="none" />
      <path d="M60 0h6v25l-6-3zM70 0h10v27q-6 0-10-1z" fill="#1a6040" stroke="none" />
      <path d="M85 0v25M90 0v22M94 0v20M98 0v17M102 0v12" strokeWidth="1.500" />
      <circle cx="149" cy="18" r="10" strokeWidth="4" />
      <circle cx="149" cy="18" r="3" strokeWidth="2" />
      <path d="M164 12q4 22 28 24 28-1 38-19 3-8 2-17" strokeWidth="6" />
      <path d="M172 13l24 21M178 10l26 23M186 10l24 20M194 12l18 15" strokeWidth="1.500" />
      <path d="M240 18l20-18M244 21l24-21M250 24l24-22M256 27l24-22" strokeWidth="2" />
    </g>
  </svg>
);

export default function App() {
  return (
    <div className="h-screen bg-black px-20 font-['Open_Sans','Noto_Sans_CJK_JP',sans-serif] text-[7px] leading-[10px] whitespace-nowrap [font-feature-settings:'palt']">
      <main className="flex h-full flex-col overflow-hidden">
        <header className="relative shrink-0 bg-[#1e6b45]">
          <HeaderArt />
          <div className="relative">
            <TitleBar />
            <TabRow />
          </div>
        </header>
        <Ribbon />
        <FormulaBar />
        <Sheet />
        <SheetTabs />
        <StatusBar />
        <Taskbar />
      </main>
    </div>
  );
}
